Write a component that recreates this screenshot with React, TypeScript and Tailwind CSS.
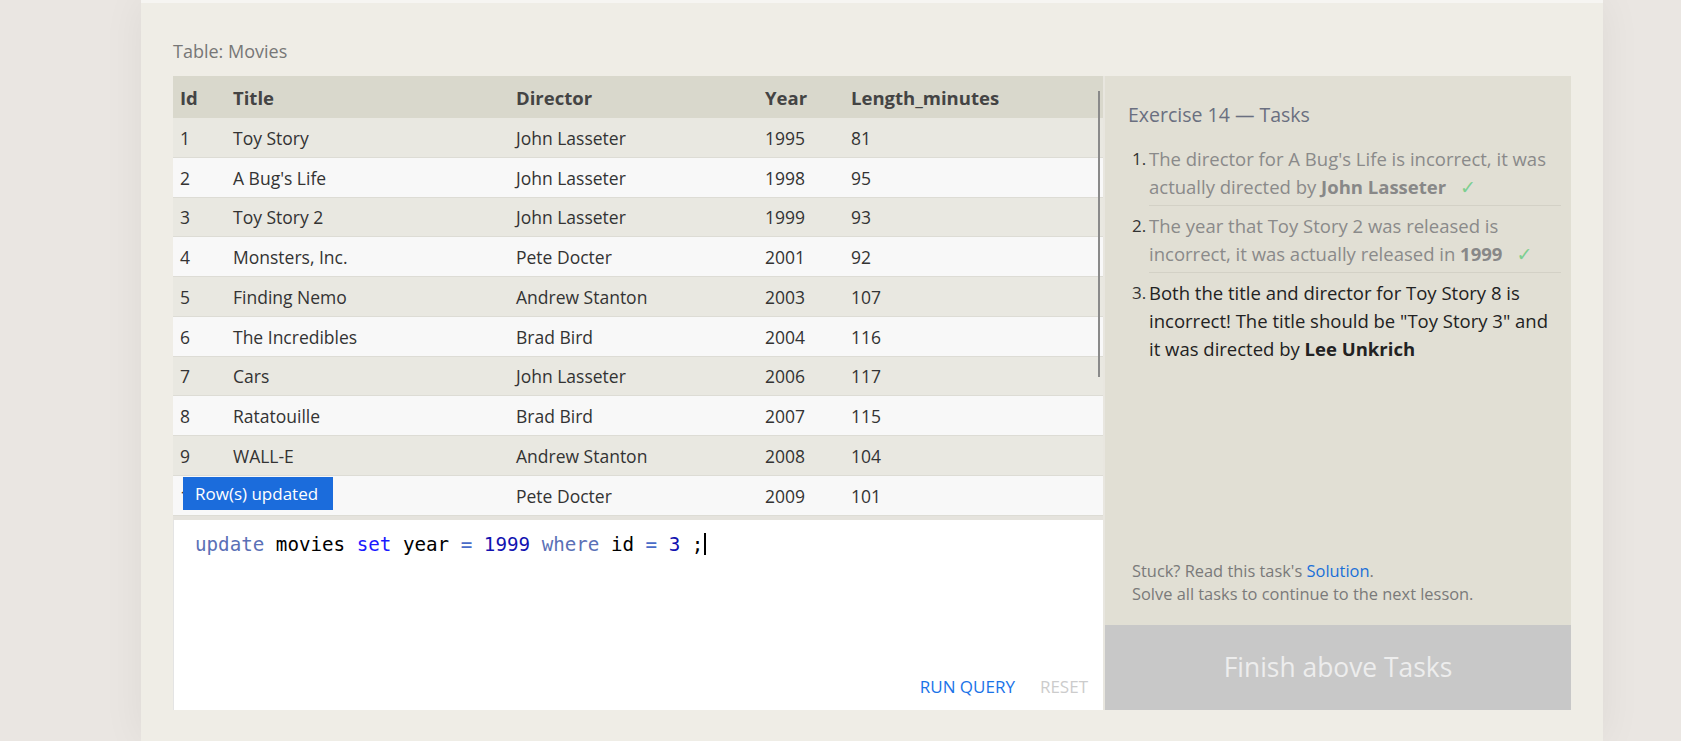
import React from "react"

const movies = [
    { id: 1, title: "Toy Story", director: "John Lasseter", year: 1995, length: 81 },
    { id: 2, title: "A Bug's Life", director: "John Lasseter", year: 1998, length: 95 },
    { id: 3, title: "Toy Story 2", director: "John Lasseter", year: 1999, length: 93 },
    { id: 4, title: "Monsters, Inc.", director: "Pete Docter", year: 2001, length: 92 },
    { id: 5, title: "Finding Nemo", director: "Andrew Stanton", year: 2003, length: 107 },
    { id: 6, title: "The Incredibles", director: "Brad Bird", year: 2004, length: 116 },
    { id: 7, title: "Cars", director: "John Lasseter", year: 2006, length: 117 },
    { id: 8, title: "Ratatouille", director: "Brad Bird", year: 2007, length: 115 },
    { id: 9, title: "WALL-E", director: "Andrew Stanton", year: 2008, length: 104 },
    { id: 10, title: "Up", director: "Pete Docter", year: 2009, length: 101 },
]

const cols = "grid grid-cols-[53px_283px_249px_86px_1fr]"

function MoviesTable() {
    return (
        <div className="relative">
            <div className={`${cols} h-[42px] items-center bg-[#d9d8cc] pt-[2px] text-[18.5px] font-bold text-[#444]`}>
                <div className="pl-[7px]">Id</div>
                <div className="pl-[7px]">Title</div>
                <div className="pl-[7px]">Director</div>
                <div className="pl-[7px]">Year</div>
                <div className="pl-[7px]">Length_minutes</div>
            </div>
            {movies.map((m, i) => (
                <div
                    key={m.id}
                    className={`${cols} h-[39.75px] items-center border-b border-[#dddcd5] pt-[1px] text-[17.5px] text-[#333] ${i % 2 == 0 ? "bg-[#e9e8e1]" : "bg-[#f8f8f8]"}`}
                >
                    <div className="pl-[7px]">{m.id}</div>
                    <div className="pl-[7px]">{m.title}</div>
                    <div className="pl-[7px]">{m.director}</div>
                    <div className="pl-[7px]">{m.year}</div>
                    <div className="pl-[7px]">{m.length}</div>
                </div>
            ))}

            {/* scrollbar */}
            <div className="absolute right-[3px] top-[15px] h-[286px] w-[2px] bg-[#8a8a8a]" />

            {/* toast */}
            <div className="absolute left-[10px] top-[401px] flex h-[33px] w-[150px] items-center bg-[#1b6cdc] pl-[12px] text-[17px] text-white">
                Row(s) updated
            </div>
        </div>
    )
}

function Editor() {
    return (
        <div className="flex h-[190px] flex-col border-l border-[#e4e4e4] bg-white">
            <div className="pl-[21px] pt-[9px] font-['DejaVu_Sans_Mono',monospace] text-[19.2px] leading-[24px] text-black">
                <span className="text-[#5a70b6]">update</span> movies <span className="text-[#1a1aff]">set</span> year{" "}
                <span className="text-[#4a6cc8]">=</span> <span className="text-[#1212b0]">1999</span>{" "}
                <span className="text-[#5a70b6]">where</span> id <span className="text-[#4a6cc8]">=</span>{" "}
                <span className="text-[#1212b0]">3</span> ;<span className="ml-[1px] inline-block h-[22px] w-[2px] translate-y-[4px] bg-black" />
            </div>
            <div className="mt-auto flex justify-end gap-[25px] pb-[11px] pr-[15px] text-[17px] leading-[24px]">
                <span className="text-[#1a73e8]">RUN QUERY</span>
                <span className="text-[#cccccc]">RESET</span>
            </div>
        </div>
    )
}

function Check() {
    return <span className="ml-[14px] font-['DejaVu_Sans',sans-serif] text-[19px] text-[#7dcf90]">✓</span>
}

function Num({ n }: { n: string }) {
    return <span className="w-[21px] shrink-0 pl-[4px] pt-[6px] text-[17px] text-[#333]">{n}</span>
}

function TasksPanel() {
    return (
        <div className="flex h-[634px] flex-1 flex-col border-l-2 border-[#e8e6df] bg-[#e1dfd4]">
            <div className="flex-1 pl-[23px] pr-[10px] pt-[26px]">
                <h3 className="text-[19.5px] leading-[26px] text-[#6a6f80]">Exercise 14 — Tasks</h3>
                <ol className="mt-[11px] text-[18.5px] leading-[28px]">
                    <li className="flex">
                        <Num n="1." />
                        <div className="flex-1 border-b border-[#d3d1c6] pb-[4px] pt-[6px] text-[#8a8a8a]">
                            The director for A Bug's Life is incorrect, it was actually directed by{" "}
                            <b className="text-[#888]">John Lasseter</b>
                            <Check />
                        </div>
                    </li>
                    <li className="flex">
                        <Num n="2." />
                        <div className="flex-1 border-b border-[#d3d1c6] pb-[4px] pt-[6px] text-[#8a8a8a]">
                            The year that Toy Story 2 was released is incorrect, it was actually released in{" "}
                            <b className="text-[#888]">1999</b>
                            <Check />
                        </div>
                    </li>
                    <li className="flex">
                        <Num n="3." />
                        <div className="flex-1 pt-[6px] text-[#222]">
                            Both the title and director for Toy Story 8 is incorrect! The title should be "Toy Story 3" and it
                            was directed by <b>Lee Unkrich</b>
                        </div>
                    </li>
                </ol>
            </div>
            <div className="pb-[20px] pl-[27px] text-[16.4px] leading-[23px] text-[#7a7a7a]">
                <div>
                    Stuck? Read this task's <span className="text-[#1a6fd8]">Solution</span>.
                </div>
                <div>Solve all tasks to continue to the next lesson.</div>
            </div>
            <div className="flex h-[85px] items-center justify-center bg-[#c8c8c8] text-[26.4px] text-[#ededed]">
                Finish above Tasks
            </div>
        </div>
    )
}

export default function App() {
    return (
        <div className="min-h-[741px] bg-[#eae6e2] font-['Open_Sans',sans-serif]">
            <div className="ml-[141px] min-h-[741px] w-[1462px] border-t-[3px] border-[#f6f5f2] bg-[#efede6] px-8 pt-[35px] shadow-[0_0_40px_rgba(0,0,0,0.06)]">
                <div className="mb-[12px] text-[18px] leading-[26px] text-[#777]">Table: Movies</div>
                <div className="flex">
                    <div className="w-[930px] shrink-0">
                        <MoviesTable />
                        <div className="h-[4px] bg-[#e5e3dd]" />
                        <Editor />
                    </div>
                    <TasksPanel />
                </div>
            </div>
        </div>
    )
}
